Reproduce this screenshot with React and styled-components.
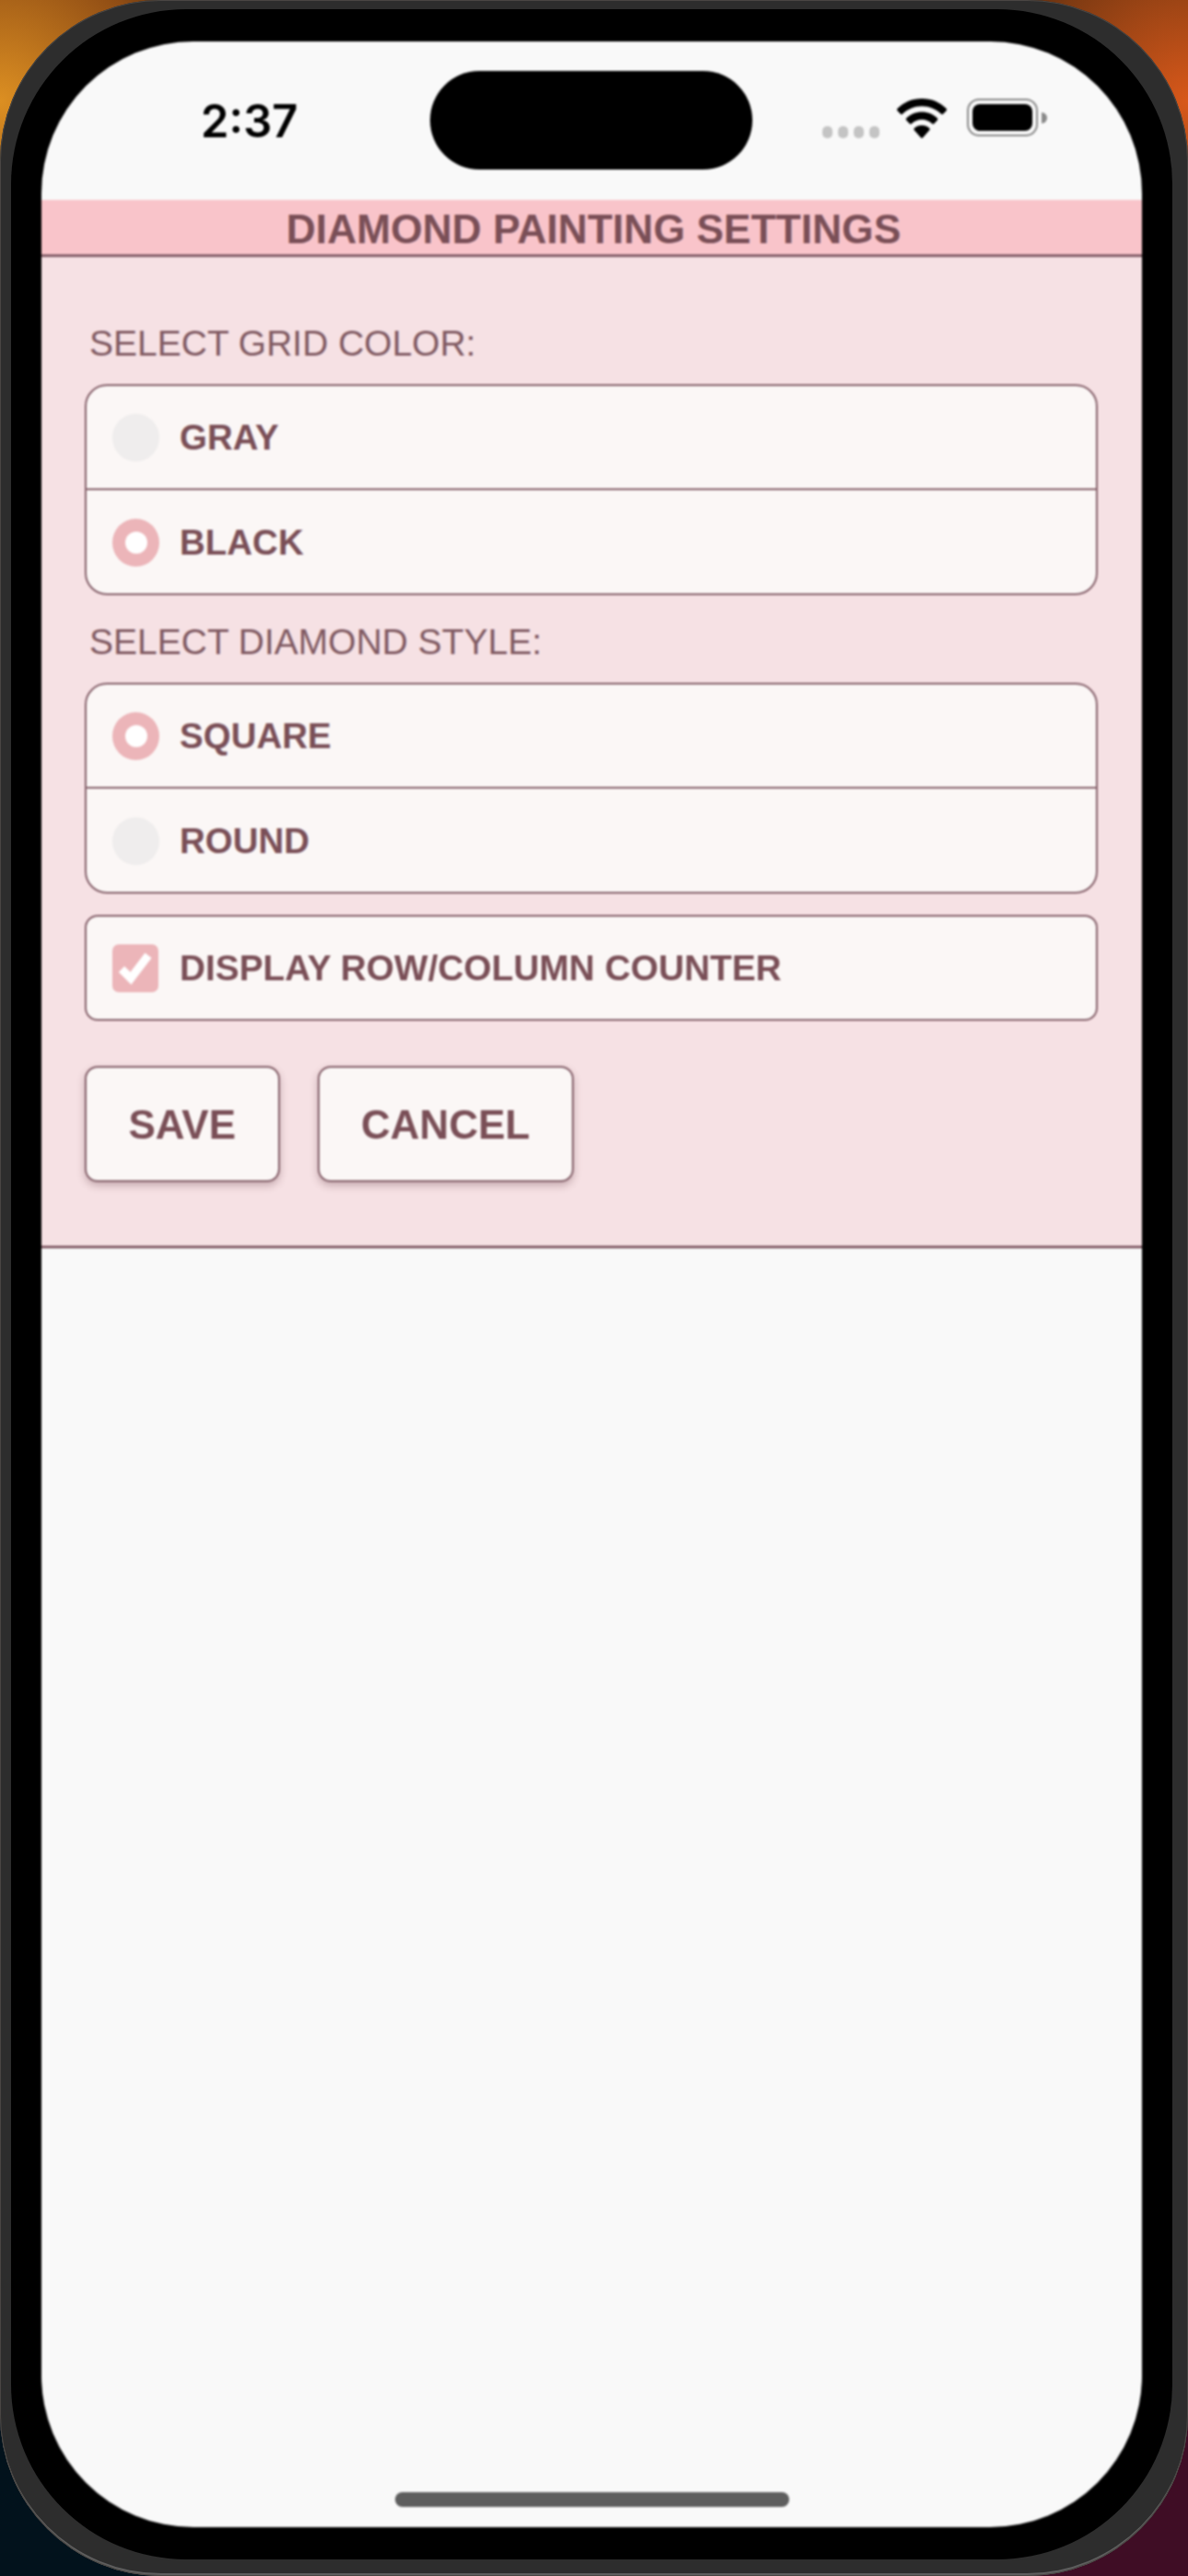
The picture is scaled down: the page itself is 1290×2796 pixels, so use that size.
import React from 'react'
import styled, { createGlobalStyle } from 'styled-components'

const GlobalStyle = createGlobalStyle`
  html, body {
    margin: 0;
    padding: 0;
  }
  body {
    font-family: "Liberation Sans", Arial, sans-serif;
  }
`

function Radio({ label, checked }) {
  return (
    <Row>
      <RadioDot $checked={checked}>{checked && <RadioHole />}</RadioDot>
      <RowText>{label}</RowText>
    </Row>
  )
}

function App() {
  return (
    <Stage>
      <GlobalStyle />
      <Bezel>
        <Glass>
          <Screen>
            <StatusBar>
              <TimeSlot>2:37</TimeSlot>
              <Island />
              <Indicators>
                <Dots>
                  <Dot />
                  <Dot />
                  <Dot />
                  <Dot />
                </Dots>
                <WifiIcon width="54" height="43" viewBox="0 0 54 43">
                  <path d="M27 0C16.500 0 7.200 4 0.500 10.800c-.6.700-.6 1.700 0 2.400l3.200 3.400c.7.700 1.800.7 2.500 0C11.600 11.300 19 8.200 27 8.200s15.400 3.100 20.800 8.400c.7.700 1.800.7 2.500 0l3.200-3.400c.6-.7.600-1.700 0-2.400C46.800 4 37.500 0 27 0z" />
                  <path d="M27 14.500c-6.600 0-12.500 2.600-16.800 6.800-.6.700-.6 1.700 0 2.300l3.300 3.500c.7.700 1.700.7 2.400.1 3-2.800 6.900-4.500 11.100-4.500s8.100 1.700 11.100 4.500c.7.600 1.700.6 2.400-.1l3.300-3.500c.6-.6.600-1.600 0-2.300C39.500 17.100 33.600 14.500 27 14.500z" />
                  <path d="M27 29c-3.200 0-6 1.200-8.100 3.100-.7.700-.7 1.700 0 2.400l6.900 7.800c.7.800 1.800.8 2.400 0l6.900-7.800c.7-.7.700-1.700 0-2.400C33 30.200 30.200 29 27 29z" />
                </WifiIcon>
                <Battery>
                  <BatteryFill />
                  <BatteryNub />
                </Battery>
              </Indicators>
            </StatusBar>

            <Header>DIAMOND PAINTING SETTINGS</Header>

            <Panel>
              <GroupLabel>SELECT GRID COLOR:</GroupLabel>
              <Group>
                <Radio label="GRAY" />
                <Radio label="BLACK" checked />
              </Group>

              <GroupLabel>SELECT DIAMOND STYLE:</GroupLabel>
              <Group>
                <Radio label="SQUARE" checked />
                <Radio label="ROUND" />
              </Group>

              <CheckGroup>
                <CheckBox>
                  <svg width="36" height="36" viewBox="0 0 36 36">
                    <path d="M3 19l10 10L32 4" fill="none" stroke="#ffffff" strokeWidth="9" />
                  </svg>
                </CheckBox>
                <CheckText>DISPLAY ROW/COLUMN COUNTER</CheckText>
              </CheckGroup>

              <Buttons>
                <Button>SAVE</Button>
                <Button>CANCEL</Button>
              </Buttons>
            </Panel>

            <Blank>
              <HomeBar />
            </Blank>
          </Screen>
        </Glass>
      </Bezel>
    </Stage>
  )
}

export default App

const Stage = styled.div`
  width: 1290px;
  height: 2796px;
  overflow: hidden;
  background:
    radial-gradient(circle at 0 110px, #dc8f22 0, #8f4c14 170px, #0c0a08 300px, transparent 320px),
    radial-gradient(circle at 1290px 110px, #d8581a 0, #7d3a12 170px, #0c0a08 300px, transparent 320px),
    linear-gradient(90deg, #02121c 0%, #02121c 40%, #3f0d25 60%, #3f0d25 100%);
`

const Bezel = styled.div`
  box-sizing: border-box;
  width: 1290px;
  height: 2796px;
  padding: 10px 17px 18px 12px;
  background: #2d2d2d;
  border-radius: 175px;
  box-shadow: inset 0 0 0 1px #4a4643, inset 0 -3px 0 #5e5e5e;
`

const Glass = styled.div`
  box-sizing: border-box;
  height: 100%;
  padding: 35px 33px;
  background: #000000;
  border-radius: 190px;
`

const Screen = styled.div`
  display: flex;
  flex-direction: column;
  height: 100%;
  overflow: hidden;
  background: #f9f9f9;
  border-radius: 165px;
  filter: blur(0.8px);
`

const StatusBar = styled.div`
  display: flex;
  align-items: flex-start;
  box-sizing: border-box;
  height: 172px;
  padding-top: 32px;
`

const TimeSlot = styled.div`
  box-sizing: border-box;
  width: 422px;
  padding: 25px 0 0 173px;
  font-family: Inter, sans-serif;
  font-size: 49px;
  font-weight: 600;
  line-height: 60px;
  color: #000000;
`

const Island = styled.div`
  width: 350px;
  height: 107px;
  background: #000000;
  border-radius: 54px;
`

const Indicators = styled.div`
  display: flex;
  align-items: flex-start;
  padding: 30px 0 0 76px;
`

const Dots = styled.div`
  display: flex;
  gap: 6px;
  margin-top: 30px;
`

const Dot = styled.div`
  width: 11px;
  height: 13px;
  background: #c4c4c4;
  border-radius: 5px;
`

const WifiIcon = styled.svg`
  margin-left: 19px;
  fill: #000000;
`

const Battery = styled.div`
  position: relative;
  box-sizing: border-box;
  width: 77px;
  height: 41px;
  margin-left: 22px;
  padding: 4px;
  border: 2px solid #8a8a8a;
  border-radius: 13px;
`

const BatteryFill = styled.div`
  height: 100%;
  background: #000000;
  border-radius: 8px;
`

const BatteryNub = styled.div`
  position: absolute;
  top: 13px;
  right: -12px;
  width: 6px;
  height: 12px;
  background: #8a8a8a;
  border-radius: 0 6px 6px 0;
`

const Header = styled.div`
  box-sizing: border-box;
  height: 62px;
  padding-left: 4px;
  background: #f9c4ca;
  border-bottom: 3px solid #85606a;
  font-size: 44.4px;
  font-weight: 700;
  line-height: 64px;
  text-align: center;
  color: #7a4f57;
`

const Panel = styled.div`
  box-sizing: border-box;
  height: 1076px;
  padding: 68px 48px 0 47px;
  background: #f6e1e4;
  border-bottom: 3px solid #85606a;
`

const GroupLabel = styled.div`
  margin-left: 5px;
  font-size: 39px;
  line-height: 52px;
  color: #805a62;
`

const Group = styled.div`
  margin: 18px 0 25px;
  overflow: hidden;
  background: #fbf7f6;
  border: 2.5px solid #85606a;
  border-radius: 24px;
`

const Row = styled.div`
  display: flex;
  align-items: center;
  box-sizing: border-box;
  height: 111px;
  padding: 1px 0 0 28px;
  & + & {
    border-top: 2.5px solid #85606a;
    height: 114px;
  }
`

const RadioDot = styled.div`
  display: flex;
  align-items: center;
  justify-content: center;
  width: 51px;
  height: 52px;
  margin-right: 22px;
  background: ${(props) => (props.$checked ? '#ecb5b9' : '#efeded')};
  border-radius: 50%;
`

const RadioHole = styled.div`
  width: 24px;
  height: 24px;
  background: #ffffff;
  border-radius: 50%;
`

const RowText = styled.div`
  font-size: 38.5px;
  font-weight: 700;
  color: #7a4f57;
`

const CheckText = styled(RowText)`
  font-size: 38.85px;
`

const CheckGroup = styled.div`
  display: flex;
  align-items: center;
  box-sizing: border-box;
  height: 115px;
  margin-top: -2px;
  padding-left: 28px;
  background: #fbf7f6;
  border: 2.5px solid #85606a;
  border-radius: 14px;
`

const CheckBox = styled.div`
  display: flex;
  align-items: center;
  justify-content: center;
  width: 50px;
  height: 52px;
  margin-right: 23px;
  background: #ecb5b9;
  border-radius: 7px;
`

const Buttons = styled.div`
  display: flex;
  gap: 41px;
  margin-top: 49px;
`

const Button = styled.div`
  box-sizing: border-box;
  height: 126px;
  padding: 0 45.5px;
  background: #fbf7f6;
  border: 2.5px solid #85606a;
  border-radius: 14px;
  box-shadow: 0 4px 8px rgba(90, 50, 60, 0.3);
  font-size: 44px;
  font-weight: 700;
  line-height: 124px;
  color: #7a4f57;
`

const Blank = styled.div`
  display: flex;
  flex: 1;
  align-items: flex-end;
  justify-content: center;
  padding-bottom: 22px;
`

const HomeBar = styled.div`
  width: 428px;
  height: 16px;
  background: #5e5e5e;
  border-radius: 8px;
`
